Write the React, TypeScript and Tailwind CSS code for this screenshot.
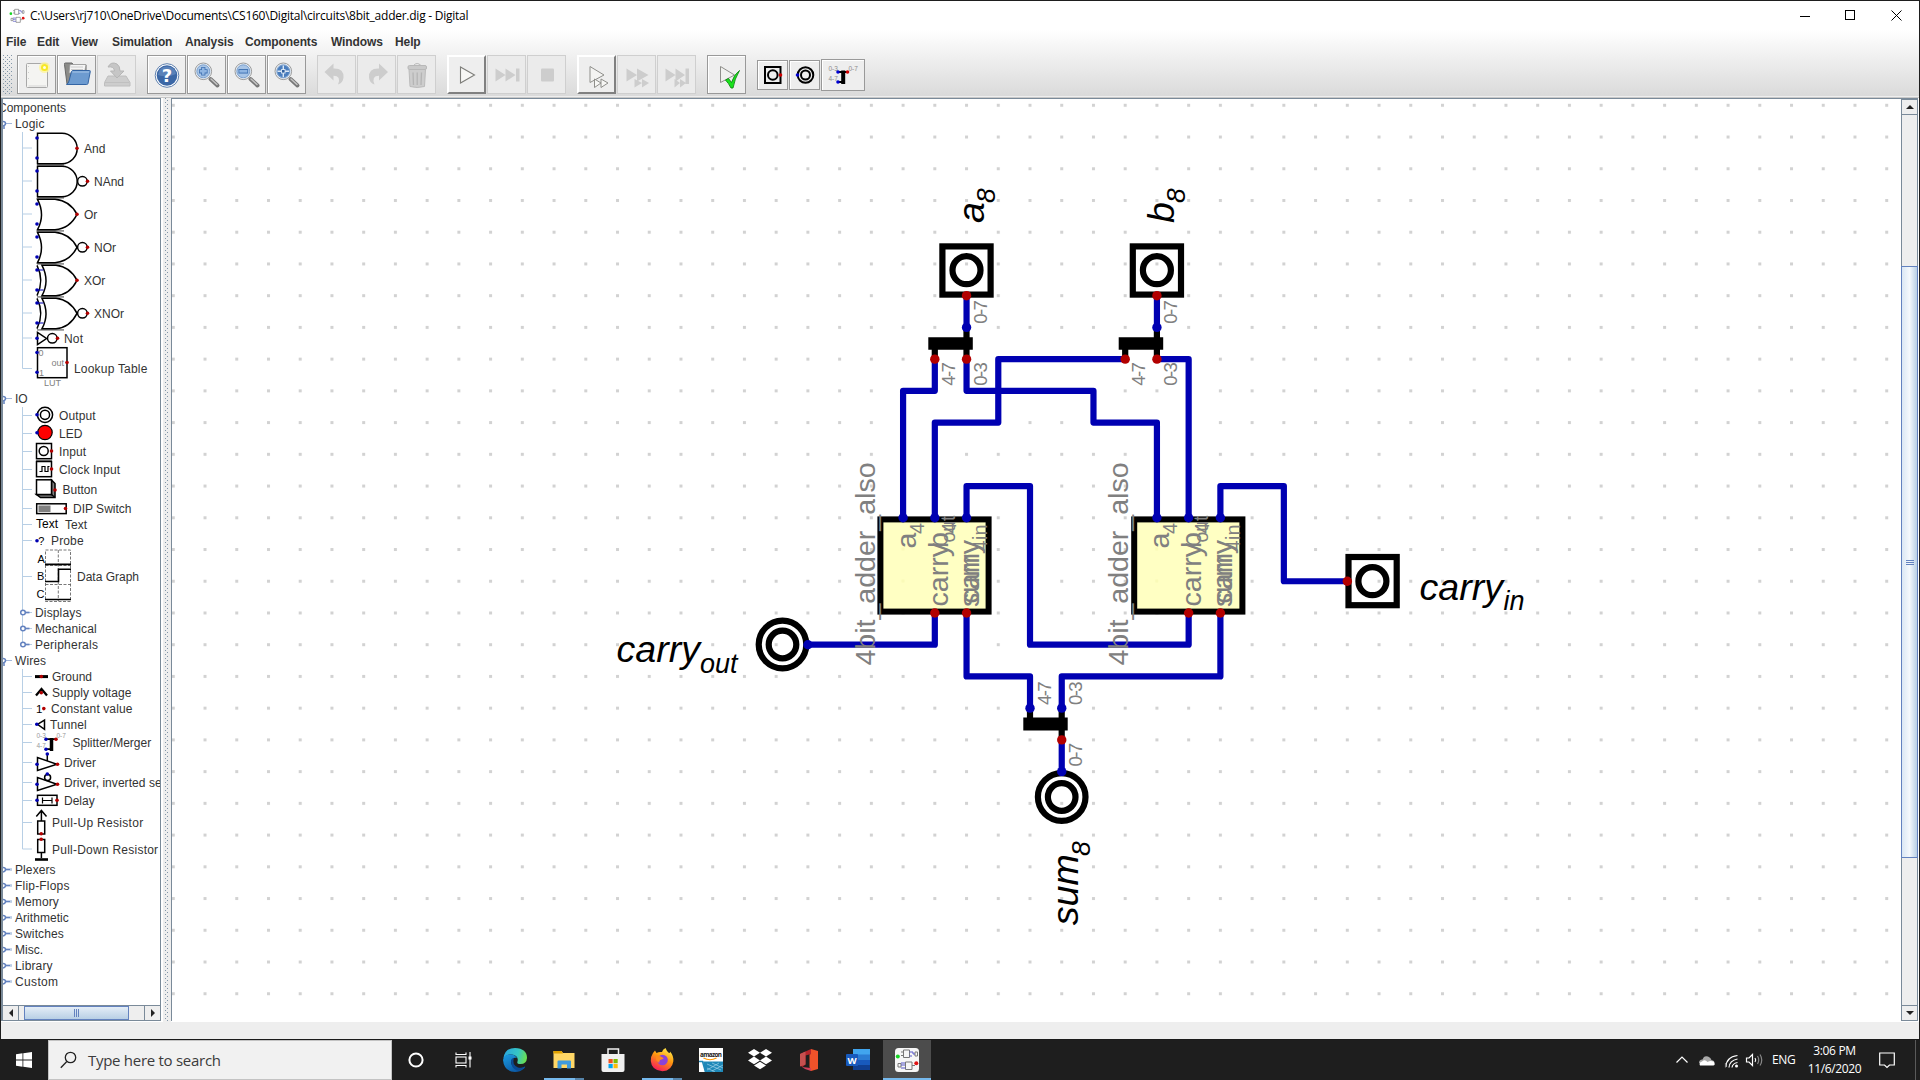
import React from "react";

const BLUE = "#0000b2";
const RED = "#b20000";

/* ------------------------------------------------------------------ */
/* Schematic                                                           */
/* ------------------------------------------------------------------ */

const PITCH = 31.73;
const gx = (i: number) => 173.3 + PITCH * i;
const gy = (j: number) => 105.3 + PITCH * j;

type P = [number, number];

const wires: P[][] = [
  [[25, 6], [25, 7]],
  [[31, 6], [31, 7]],
  [[24, 8], [24, 9], [23, 9], [23, 13]],
  [[25, 8], [25, 9], [29, 9], [29, 10], [31, 10], [31, 13]],
  [[31, 8], [32, 8], [32, 13]],
  [[30, 8], [26, 8], [26, 10], [24, 10], [24, 13]],
  [[25, 13], [25, 12], [27, 12], [27, 17], [32, 17], [32, 16]],
  [[24, 16], [24, 17], [20, 17]],
  [[25, 16], [25, 18], [27, 18], [27, 19]],
  [[33, 16], [33, 18], [28, 18], [28, 19]],
  [[28, 20], [28, 21]],
  [[33, 13], [33, 12], [35, 12], [35, 15], [37, 15]],
];

const bluePins: P[] = [[25, 7], [31, 7], [23, 13], [24, 13], [25, 13], [31, 13], [32, 13], [33, 13], [20, 17], [27, 19], [28, 19], [28, 21]];
const redPins: P[] = [[25, 6], [31, 6], [24, 8], [25, 8], [30, 8], [31, 8], [24, 16], [25, 16], [32, 16], [33, 16], [28, 20], [37, 15]];

function Vert({ x, y, size, children, fill = "#808080", italic, len }: { x: number; y: number; size: number; children: string; fill?: string; italic?: boolean; len?: number }) {
  return (
    <text transform={`translate(${x} ${y}) rotate(-90)`} fontSize={size} fill={fill} fontStyle={italic ? "italic" : "normal"} textLength={len}>
      {children}
    </text>
  );
}

function Chip({ dx }: { dx: number }) {
  return (
    <g transform={`translate(${dx} 0)`}>
      <rect x={880.4} y={519.4} width={108.2} height={92.2} fill="#ffffc3" stroke="#000" strokeWidth={6} />
      <rect x={901.5} y={547.5} width={3} height={3} fill="#fafab8" />
      <rect x={901.5} y={579.5} width={3} height={3} fill="#fafab8" />
    </g>
  );
}

function ChipText({ dx }: { dx: number }) {
  return (
    <g transform={`translate(${dx} 0)`}>
      <Vert x={874.700} y={665.600} size={28.56}>4bit_adder_also</Vert>
      <Vert x={916} y={548.500} size={28.56}>a</Vert>
      <Vert x={924} y={534} size={20}>4</Vert>
      <Vert x={948} y={606.5} size={28.56}>carry</Vert>
      <Vert x={954.8} y={542.5} size={19.4}>out</Vert>
      <Vert x={948} y={548} size={28.56}>b</Vert>
      <Vert x={955.8} y={533.500} size={20}>4</Vert>
      <Vert x={979} y={607} size={28.56}>sum</Vert>
      <Vert x={986.5} y={551.5} size={20}>4</Vert>
      <Vert x={979} y={603.5} size={28.56}>carry</Vert>
      <Vert x={987} y={540} size={20}>in</Vert>
    </g>
  );
}

function Schematic() {
  return (
    <svg className="block h-[922px] w-[1729px]" viewBox="172 99 1729 922" fontFamily='"Liberation Sans", Arial, sans-serif'>
      <defs>
        <pattern id="grid" x={171.8} y={103.8} width={PITCH} height={PITCH} patternUnits="userSpaceOnUse">
          <rect width={3} height={3} fill="#d2d2d2" />
        </pattern>
      </defs>
      <rect x={172} y={99} width={1729} height={922} fill="#fff" />
      <rect x={172} y={99} width={1729} height={922} fill="url(#grid)" />
      <Chip dx={0} />
      <Chip dx={253.8} />
      <g fill="none" stroke={BLUE} strokeWidth={6.2} strokeLinejoin="round" strokeLinecap="round">
        {wires.map((w, k) => (
          <polyline key={k} points={w.map(([i, j]) => `${gx(i)},${gy(j)}`).join(" ")} />
        ))}
      </g>
      <g fill="none" stroke="#000" strokeWidth={6.2}>
        {[966.5, 1156.9].map((cx) => (
          <g key={cx}>
            <rect x={cx - 24.1} y={246.4} width={48.2} height={48.2} />
            <circle cx={cx} cy={270.2} r={14} />
            <path d={`M${cx} 327.5V359M${cx - 31.7} 343V359`} />
            <path d={`M${cx - 38.2} 343.5H${cx + 6.3}`} strokeWidth={12.4} />
          </g>
        ))}
        <rect x={1348.5} y={557} width={48.2} height={48.2} />
        <circle cx={1372.4} cy={581.2} r={14} />
        <circle cx={782.5} cy={644.5} r={23.8} />
        <circle cx={782.5} cy={644.5} r={13.8} />
        <circle cx={1061.7} cy={797} r={23.8} />
        <circle cx={1061.7} cy={797} r={13.8} />
        <path d="M1030 708V724M1061.7 708V740" />
        <path d="M1023.3 724H1067.7" strokeWidth={13} />
      </g>
      {bluePins.map(([i, j]) => <circle key={`${i}-${j}`} cx={gx(i)} cy={gy(j)} r={4.7} fill={BLUE} />)}
      {redPins.map(([i, j]) => <circle key={`${i}-${j}`} cx={gx(i)} cy={gy(j)} r={4.7} fill={RED} />)}
      <ChipText dx={0} />
      <ChipText dx={253.3} />
      {[0, 190.6].map((d) => (
        <g key={d} transform={`translate(${d} 0)`}>
          <Vert x={986.800} y={323.700} size={18.600} len={23.600}>0-7</Vert>
          <Vert x={954.800} y={385.800} size={18.600} len={23.600}>4-7</Vert>
          <Vert x={986.800} y={385.800} size={18.600} len={23.600}>0-3</Vert>
        </g>
      ))}
      <Vert x={1050.500} y={705} size={18.600} len={23.600}>4-7</Vert>
      <Vert x={1081.700} y={705} size={18.600} len={23.600}>0-3</Vert>
      <Vert x={1081.700} y={766.500} size={18.600} len={23.600}>0-7</Vert>
      <Vert x={983.7} y={223} size={37.6} fill="#000" italic>a</Vert>
      <Vert x={994.5} y={203} size={26.500} fill="#000" italic>8</Vert>
      <Vert x={1173.7} y={223} size={37.6} fill="#000" italic>b</Vert>
      <Vert x={1184.9} y={203} size={26.500} fill="#000" italic>8</Vert>
      <Vert x={1078.3} y={925.3} size={37.6} fill="#000" italic>sum</Vert>
      <Vert x={1089.5} y={856} size={26.500} fill="#000" italic>8</Vert>
      <g fontStyle="italic" fill="#000">
        <text x={616.500} y={662} fontSize={37.6}>carry</text>
        <text x={700} y={673} fontSize={27}>out</text>
        <text x={1419.500} y={599.500} fontSize={37.6}>carry</text>
        <text x={1503.5} y={609.8} fontSize={27}>in</text>
      </g>
    </svg>
  );
}

/* ------------------------------------------------------------------ */
/* Component tree                                                      */
/* ------------------------------------------------------------------ */

const Dot = ({ x, y, c = BLUE }: { x: number; y: number; c?: string }) => <circle cx={x} cy={y} r={1.8} fill={c} stroke="none" />;

function AndIcon({ inv }: { inv?: boolean }) {
  return (
    <>
      <path d="M37 32.9H64" stroke="#808080" />
      <path d="M37.5 1.3H62a15.2 15.2 0 0 1 0 30.4H37.5z" />
      {inv && <circle cx={82.4} cy={16.3} r={4.8} />}
      <Dot x={37} y={6} /><Dot x={37} y={26} /><Dot x={inv ? 87.5 : 77} y={16.3} c={RED} />
    </>
  );
}

function OrIcon({ inv, x }: { inv?: boolean; x?: boolean }) {
  return (
    <>
      <path d="M37 32.9H64" stroke="#808080" />
      {x && <path d="M37 1.3q7.500 15 0 30.400" />}
      <path d={x ? "M42 1.3H56q14 1.500 21 15q-7 14-21 15.400H42q8-15 0-30.400z" : "M37.500 1.3H55q15 1.500 22 15q-7 14-22 15.400H37.500q8-15 0-30.400z"} />
      {inv && <circle cx={82.4} cy={16.3} r={4.800} />}
      {x && <path d="M38 6H43.500M38 26H43.500" stroke={BLUE} strokeWidth={1.2} />}
      <Dot x={37} y={6} /><Dot x={37} y={26} /><Dot x={inv ? 87.5 : 77} y={16.3} c={RED} />
    </>
  );
}

const tiny = { fill: "#808080", stroke: "none", fontSize: 9 };

type Row = { t: string; h: number; level: 0 | 1 | 2 | 3; tx?: number; icon?: React.ReactNode; last?: boolean; open?: boolean; ls?: number };

const rows: Row[] = [
  { t: "Components", h: 16, level: 0 },
  { t: "Logic", h: 16, level: 1, open: true, ls: 0.2 },
  { t: "And", h: 33, level: 2, tx: 84, icon: <AndIcon /> },
  { t: "NAnd", h: 33, level: 2, tx: 94, icon: <AndIcon inv /> },
  { t: "Or", h: 33, level: 2, tx: 84, icon: <OrIcon /> },
  { t: "NOr", h: 33, level: 2, tx: 94, icon: <OrIcon inv /> },
  { t: "XOr", h: 33, level: 2, tx: 84, icon: <OrIcon x /> },
  { t: "XNOr", h: 33, level: 2, tx: 94, icon: <OrIcon inv x /> },
  { t: "Not", h: 17, level: 2, tx: 64, ls: 0.2, icon: <><path d="M37.5 2.500V14.500L46.500 8.500z" /><circle cx={52.3} cy={8.3} r={4.8} /><Dot x={37} y={8.3} /><Dot x={57.5} y={8.3} c={RED} /></> },
  {
    t: "Lookup Table", h: 44, level: 2, tx: 74, last: true, ls: 0.2,
    icon: <><rect x={37.5} y={0.7} width={29.5} height={30} /><text x={38.500} y={9} {...tiny}>0</text><text x={39} y={29} {...tiny}>1</text><text x={51.5} y={18.500} {...tiny}>out</text><text x={44} y={39.3} {...tiny}>LUT</text><Dot x={37} y={5.500} /><Dot x={37} y={25.300} /><Dot x={67} y={15.5} c={RED} /></>,
  },
  { t: "IO", h: 16, level: 1, open: true },
  { t: "Output", h: 18, level: 2, tx: 59, ls: 0.1, icon: <><circle cx={45} cy={7.8} r={7.6} /><circle cx={45} cy={7.8} r={4.6} /><Dot x={37} y={7.8} /></> },
  { t: "LED", h: 18, level: 2, tx: 59, icon: <><circle cx={45} cy={7.5} r={7.2} fill="#f00" strokeWidth={1.2} /><Dot x={37} y={7.8} /></> },
  { t: "Input", h: 18, level: 2, tx: 59, ls: 0.1, icon: <><rect x={36.500} y={0.500} width={15} height={15.2} /><path d="M36 17.300H52" stroke="#808080" /><circle cx={43.700} cy={8} r={4.5} /><Dot x={51.500} y={8} c={RED} /></> },
  { t: "Clock Input", h: 18, level: 2, tx: 59, ls: 0.1, icon: <><rect x={36.5} y={0.5} width={15} height={15.2} /><path d="M39.500 10.500H42V5.500H45V10.500H48V5.500H49.500" strokeWidth={1.2} /><Dot x={51.5} y={8} c={RED} /></> },
  { t: "Button", h: 22, level: 2, tx: 62.5, icon: <><path d="M51.500 1L55 4.500V18.500H40.500L36.500 15.500H51.500z" fill="#808080" /><rect x={36.500} y={0.800} width={15} height={14.700} fill="#fff" /><path d="M51.500 15.500L55 18.500" /><Dot x={55} y={11} c={RED} /></> },
  { t: "DIP Switch", h: 16, level: 2, tx: 73, icon: <><rect x={36.7} y={2.8} width={29.500} height={9.800} /><rect x={38.500} y={4.500} width={12} height={6.500} fill="#808080" stroke="none" /><Dot x={65.5} y={7.500} c={RED} /></> },
  { t: "Text", h: 16, level: 2, tx: 65, icon: <text x={36} y={11.3} fontSize={12} stroke="none" fill="#000">Text</text> },
  { t: "Probe", h: 16, level: 2, tx: 51, ls: 0.15, icon: <><text x={38.200} y={11.6} fontSize={11} stroke="none" fill="#000">?</text><Dot x={37} y={7.800} /></> },
  {
    t: "Data Graph", h: 56, level: 2, tx: 77,
    icon: <><path d="M45.5 1H70.500V52.500H45.500zM58.300 1V52M45.500 16.500H70.500M45.500 35.500H70.500" strokeWidth={0.8} stroke="#555" strokeDasharray="3 1.500" /><path d="M45 15.400H71M45 32.500H58.500V20.200H71M45 50.500H71" strokeWidth={1.6} /><g stroke="none" fill="#000" fontSize={11}><text x={37.500} y={14}>A</text><text x={37} y={31}>B</text><text x={36.500} y={49}>C</text></g></>,
  },
  { t: "Displays", h: 16, level: 3, ls: 0.15 },
  { t: "Mechanical", h: 16, level: 3, ls: 0.1 },
  { t: "Peripherals", h: 16, level: 3, last: true, ls: 0.22 },
  { t: "Wires", h: 16, level: 1, open: true, ls: 0.1 },
  { t: "Ground", h: 16, level: 2, tx: 52, icon: <><path d="M35 7.600H48" strokeWidth={3} /><Dot x={41.300} y={7.500} c={RED} /></> },
  { t: "Supply voltage", h: 16, level: 2, tx: 52, ls: 0.05, icon: <><path d="M36 10.500L41.500 4L47 10.500" strokeWidth={2.300} /><Dot x={41.300} y={7.800} c={RED} /></> },
  { t: "Constant value", h: 16, level: 2, tx: 51, ls: 0.1, icon: <><text x={36} y={11.700} fontSize={11.500} stroke="none" fill="#000">1</text><Dot x={43.800} y={7.600} c={RED} /></> },
  { t: "Tunnel", h: 16, level: 2, tx: 50, ls: 0.1, icon: <><path d="M37.500 7.300L44.500 3V12.300z" /><Dot x={36.800} y={7.300} /></> },
  {
    t: "Splitter/Merger", h: 20, level: 2, tx: 72.5,
    icon: <><path d="M46 6.200H56M46 16.200H51" strokeWidth={1.800} /><path d="M51.500 5V18" strokeWidth={3.500} /><g stroke="none" fill="#999" fontSize={6.500}><text x={36.500} y={5.200}>0-3</text><text x={36.500} y={15}>4-7</text><text x={56.500} y={5.200}>0-7</text></g><Dot x={46} y={6.200} /><Dot x={46} y={16.200} /><Dot x={56} y={6.200} c={RED} /></>,
  },
  { t: "Driver", h: 20, level: 2, tx: 64, icon: <><path d="M37.500 4.500V17.500L57 11.300zM47.300 1.500V8" /><Dot x={47.300} y={1} /><Dot x={37} y={11.300} /><Dot x={57.500} y={11.300} c={RED} /></> },
  { t: "Driver, inverted select", h: 20, level: 2, tx: 64, ls: 0.05, icon: <><path d="M37.500 4.500V17.500L57 11.300z" /><circle cx={47.600} cy={4.600} r={3} /><Dot x={47.300} y={1} /><Dot x={37} y={11.300} /><Dot x={57.500} y={11.300} c={RED} /></> },
  { t: "Delay", h: 16, level: 2, tx: 64, icon: <><rect x={37.500} y={2.300} width={19.500} height={10} /><path d="M42.500 4.500V10.500M52 4.500V10.500M42.500 7.500H52" strokeWidth={1.200} /><Dot x={37} y={7.300} /><Dot x={57} y={7.300} c={RED} /></> },
  { t: "Pull-Up Resistor", h: 28, level: 2, tx: 52, ls: 0.3, icon: <><path d="M36.300 7.500L41.400 1.500L46.500 7.500M41.400 1.500V12" /><rect x={37.700} y={12} width={7} height={13} /><Dot x={41.200} y={24.800} c={RED} /></> },
  { t: "Pull-Down Resistor", h: 25, level: 2, tx: 52, last: true, ls: 0.24, icon: <><rect x={37.700} y={2.500} width={7} height={13} /><path d="M41.400 15.500V21" /><path d="M35 22.500H48" strokeWidth={2.600} /><Dot x={41.200} y={2.200} c={RED} /></> },
  ...([["Plexers", 0.1], ["Flip-Flops", 0.2], ["Memory", 0.1], ["Arithmetic", 0.05], ["Switches", 0.1], ["Misc.", 0], ["Library", 0.15], ["Custom", 0.35]] as [string, number][]).map(([t, ls]): Row => ({ t, ls, h: 16, level: 1 })),
];

function TreeRow({ r }: { r: Row }) {
  const tx = r.level === 1 ? 15 : r.level === 3 ? 35 : r.tx ?? 3;
  const m = r.h / 2 - 0.5;
  return (
    <div className="flex shrink-0 items-center overflow-visible" style={{ height: r.h }}>
      {r.level === 0 ? (
        <span className="-ml-[5px]" />
      ) : (
        <svg className="shrink-0 overflow-visible" width={tx - 3} height={r.h} viewBox={`3 0 ${tx - 3} ${r.h}`} fill="none" stroke="#000" strokeWidth={1.5}>
          {r.level === 1 && (
            <g stroke="#6382bf">
              <path d="M6 7.500H12" stroke={r.open ? "#a3b8d9" : "#6382bf"} strokeWidth={r.open ? 1 : 1.700} />
              <path d={r.open ? "M3 5.500Q5.500 5.500 5.500 7.500T3 10M4 9V13" : "M3 5.500Q5.500 5.500 5.500 7.500T3 10"} />
              {!r.open && <path d="M10 7.500H12" stroke="#b8cfe5" strokeWidth={1} />}
            </g>
          )}
          {r.level >= 2 && (
            <g stroke="#b8cfe5" strokeWidth={1}>
              <path d={`M22.500 0V${r.last ? m : r.h}M22.500 ${m}H32`} />
              {r.level === 3 && (
                <g stroke="#6382bf" strokeWidth={1.700}>
                  <path d="M25 7.500H29.500" />
                  <circle cx={23} cy={7.500} r={2.300} fill="#fff" strokeWidth={1.500} />
                </g>
              )}
            </g>
          )}
          {r.icon}
        </svg>
      )}
      <span className="whitespace-nowrap text-[12px] leading-4 text-[#333]" style={{ letterSpacing: r.ls ?? 0 }}>{r.t}</span>
    </div>
  );
}

/* ------------------------------------------------------------------ */
/* Toolbar                                                             */
/* ------------------------------------------------------------------ */

function Btn({ children, off, raised }: { children: React.ReactNode; off?: boolean; raised?: boolean }) {
  const cls = off
    ? "border border-[#cfcfcf] bg-[#ebebeb]"
    : raised
      ? "border-2 border-t-white border-l-white border-r-[#808080] border-b-[#808080] bg-[#eee]"
      : "border border-[#999] bg-[#eee] shadow-[inset_1px_1px_0_#fff]";
  return (
    <div className={`flex size-[39px] items-center justify-center ${cls}`}>
      <svg width={26} height={26} viewBox="0 0 26 26" className="overflow-visible">{children}</svg>
    </div>
  );
}

function Lens({ children }: { children: React.ReactNode }) {
  return (
    <g transform="translate(-0.500 0)">
      <path d="M17 17L24 23.500" stroke="#777" strokeWidth={4} strokeLinecap="round" />
      <path d="M17.500 17L23.500 22.500" stroke="#c4c4c4" strokeWidth={1.500} strokeLinecap="round" />
      <circle cx={9.800} cy={9.300} r={8.300} fill="#e8eef5" stroke="#9a9a9a" strokeWidth={1} />
      <circle cx={9.800} cy={9.300} r={6.500} fill="#a9c5e6" stroke="#6b93c4" strokeWidth={0.800} />
      {children}
    </g>
  );
}

const G = "#cdcdcd";

function Toolbar() {
  return (
    <div className="flex h-[41px] items-center pl-[2px]">
      <div className="mr-1 h-[39px] w-[10px] bg-[radial-gradient(circle_at_0.5px_0.5px,#8296a8_0.5px,transparent_0.7px),radial-gradient(circle_at_2.5px_2.5px,#8296a8_0.5px,transparent_0.7px)] bg-size-[4px_4px]" />
      <div className="flex gap-px">
        <Btn>
          <rect x={2.500} y={1.500} width={21} height={24} rx={1} fill="#f4f4f2" stroke="#a8a8a8" />
          <path d="M4.500 24H22" stroke="#d5d5d5" />
          <path d="M4.500 4V22" stroke="#ccc" strokeDasharray="1 5" />
          <circle cx={20.500} cy={5.500} r={5.500} fill="#fff59a" opacity={0.800} />
          <circle cx={20.500} cy={5.500} r={3.500} fill="#f7e827" />
          <circle cx={20.500} cy={5.500} r={1.500} fill="#fffde0" />
        </Btn>
        <Btn>
          <path d="M0.500 2.500Q0 1 1.500 1H8L9.500 3H22V9L4 22H3z" fill="#8b8b88" stroke="#666" />
          <path d="M6 2.500H22L20.500 11H5z" fill="#f5f5f5" stroke="#999" strokeWidth={0.800} />
          <path d="M7 5H19M7 7.500H19" stroke="#ccc" />
          <path d="M7.500 9.500Q8 8.500 9 8.500H25.500Q26.500 8.500 26.300 9.500L24 21.500Q23.800 22.500 22.500 22.500H2.500Q4.500 21.500 5 19z" fill="#6d9bd0" stroke="#3465a4" />
          <path d="M8.300 10H25" stroke="#a9c6e8" />
        </Btn>
        <Btn off>
          <path d="M4 14H22L26 20.500V24H0.500V20.500z" fill={G} stroke="#bebebe" />
          <path d="M1 20.500H25.500" stroke="#c0c0c0" />
          <path d="M4 5Q7 -1 13 2Q16 4 16 9H20L13 16L6.500 9H10.500Q10 4 4 5z" fill="#c6c6c6" stroke="#b6b6b6" />
        </Btn>
      </div>
      <div className="ml-[11px] flex gap-px">
        <Btn>
          <circle cx={13} cy={13.500} r={11.800} fill="#fff" stroke="#5d7fae" />
          <circle cx={13} cy={13.500} r={10.300} fill="#3b67a6" />
          <path d="M4 13Q13 16 22 12Q21 4.500 13 4.500Q5 4.500 4 13z" fill="#6f95c6" opacity={0.600} />
          <text x={13} y={20} textAnchor="middle" fontSize={18} fontWeight={700} fill="#fff" fontFamily='"DejaVu Sans", sans-serif'>?</text>
        </Btn>
        <Btn><Lens><path d="M9.800 5V13.600M5.500 9.300H14.100" stroke="#3f71b2" strokeWidth={4.200} /><path d="M9.800 5.800V12.800M6.300 9.300H13.300" stroke="#8fb5e2" strokeWidth={2.600} /></Lens></Btn>
        <Btn><Lens><path d="M5 9.300H14.600" stroke="#3f71b2" strokeWidth={4.500} /><path d="M5.800 9.300H13.800" stroke="#8fb5e2" strokeWidth={2.600} /></Lens></Btn>
        <Btn><Lens><circle cx={9.800} cy={9.300} r={6} fill="#4a7dbd" /><path d="M9.800 3.500V15M4 9.300H15.600" stroke="#dbe8f6" strokeWidth={1.400} /><rect x={7.600} y={7.100} width={4.400} height={4.400} fill="#dbe8f6" /><rect x={8.500} y={8} width={2.600} height={2.600} fill="#2f5f9e" /></Lens></Btn>
      </div>
      <div className="ml-[11px] flex gap-px">
        <Btn off><path d="M0.500 10L9.500 1.500V6.500Q20 6 19.500 15.500Q19 21 14 22.500Q17.500 14 9.500 13.800V18.500z" fill={G} /></Btn>
        <Btn off><path d="M21.500 10L12.500 1.500V6.500Q2 6 2.500 15.500Q3 21 8 22.500Q4.500 14 12.500 13.800V18.500z" transform="translate(2.500 0)" fill={G} /></Btn>
        <Btn off>
          <path d="M5 7.500H21.500L20.500 24.500Q13 26.500 6 24.500z" fill={G} stroke="#bbb" />
          <rect x={4} y={3.500} width={18.500} height={4} rx={1.500} fill="#c9c9c9" stroke="#b8b8b8" />
          <path d="M9.500 3.500Q13 -0.500 17 3.500" stroke="#b8b8b8" fill="none" />
          <path d="M9 10.500L9.500 23M13.200 10.500V23M17.500 10.500L17 23" stroke="#b4b4b4" strokeWidth={1.300} />
        </Btn>
      </div>
      <div className="ml-[11px] flex gap-px">
        <Btn raised><path d="M6.500 5L20.500 13L6.500 21z" fill="#f7f7f5" stroke="#7e7e7a" strokeWidth={1.100} /></Btn>
        <Btn off><path d="M1.500 6.500L11.500 13L1.500 19.500zM11.500 6.500L21.500 13L11.500 19.500zM22 6.500H25.500V19.500H22z" fill={G} /></Btn>
        <Btn off><rect x={7} y={6.500} width={13} height={13} rx={1} fill={G} /></Btn>
      </div>
      <div className="ml-[11px] flex gap-px">
        <Btn raised>
          <path d="M6 4.500L20 13L6 20.500z" fill="#f4f4f2" stroke="#8e8e8a" />
          <path d="M10.500 17L17 21L10.500 25.500zM17 17L24 21L17 25.500z" fill="#f7f7f5" stroke="#8e8e8a" />
        </Btn>
        <Btn off><path d="M2.500 6.500L13 13L2.500 19.500zM13 6.500L24.500 13L13 19.500zM10.500 17L18 21L10.500 25.500zM18 17L25 21L18 25.500z" fill={G} /></Btn>
        <Btn off><path d="M1.500 6.500L11.500 13L1.500 19.500zM11.500 6.500L21 13L11.500 19.500zM21.500 6.500H25V22H21.500zM10.500 17L16 21L10.500 25.500zM16 17L22 21L16 25.500z" fill={G} /></Btn>
      </div>
      <div className="ml-[11px] flex">
        <Btn>
          <path d="M6.500 4.500L20.500 13L6.500 20.500z" fill="#f1f1ef" stroke="#8e8e8a" />
          <path d="M11.500 18L14.500 16.500L17.500 20.500Q20 12.500 25.500 8.500Q20.500 17 19 26H17Q14.500 21 11.500 18z" fill="#19e31c" stroke="#0d8a10" strokeWidth={0.900} />
        </Btn>
      </div>
      <div className="ml-[11px] flex items-center gap-px">
        <div className="flex h-[30px] w-[31px] items-center justify-center border border-[#999] bg-[#eee] shadow-[inset_1px_1px_0_#fff]">
          <svg width={20} height={20} viewBox="0 0 20 20" fill="none" stroke="#000" strokeWidth={2}><rect x={2} y={2} width={15.500} height={16} /><circle cx={9.800} cy={10} r={4.800} /><Dot x={17.500} y={10} c="#d00000" /></svg>
        </div>
        <div className="flex h-[30px] w-[31px] items-center justify-center border border-[#999] bg-[#eee] shadow-[inset_1px_1px_0_#fff]">
          <svg width={20} height={20} viewBox="0 0 20 20" fill="none" stroke="#000" strokeWidth={2}><circle cx={10.500} cy={10} r={7.800} /><circle cx={10.500} cy={10} r={4.500} /><Dot x={2.500} y={10} c="#0000d0" /></svg>
        </div>
        <div className="flex h-[32px] w-[44px] items-center justify-center border border-[#999] bg-[#eee] shadow-[inset_1px_1px_0_#fff]">
          <svg width={32} height={20} viewBox="0 0 32 20" className="overflow-visible" fontFamily='"Liberation Sans", sans-serif'>
            <path d="M11 7H20M11 17H16" stroke="#000" strokeWidth={2} /><path d="M16.200 5.500V19" stroke="#000" strokeWidth={4} />
            <g fill="#8c8c8c" fontSize={6.500}><text x={1.500} y={5.500}>0-3</text><text x={1.500} y={16}>4-7</text><text x={21.500} y={5.500}>0-7</text></g>
            <Dot x={11} y={7} c="#0000d0" /><Dot x={11} y={17} c="#0000d0" /><Dot x={20.500} y={7} c="#d00000" />
          </svg>
        </div>
      </div>
    </div>
  );
}

/* ------------------------------------------------------------------ */
/* Taskbar                                                             */
/* ------------------------------------------------------------------ */

function MiniDigital({ round }: { round?: boolean }) {
  return (
    <>
      {round && <rect width={24} height={24} rx={3.500} fill="#f6f6f6" />}
      <g fill="none" stroke="#777" strokeWidth={1}>
        <path d="M8.500 2H14.500V9.500H8.500zM6 4H8.500M6 7.500H8.500" />
        <path d="M10.500 14H17V21.500H10.500zM17 17.500H20" />
        <path d="M3 15.500H6V19H3z" />
        <path d="M20 4H22.500V8H20z" />
        <path d="M14.500 4H18V6H20M14.500 8H17M6 17H10M6 15H10M6 20H10.500" stroke="#5656c8" />
      </g>
      <circle cx={2.800} cy={8.500} r={2} fill="#15d524" />
      <circle cx={21.300} cy={15.300} r={2} fill="#e01313" />
    </>
  );
}

function Task({ children, line, active }: { children: React.ReactNode; line?: boolean; active?: boolean }) {
  return (
    <div className={`flex h-10 w-12 flex-col items-center ${active ? "bg-[#4c4c4c]" : ""}`}>
      <svg className="mt-2 mb-[6px] shrink-0" width={24} height={24} viewBox="0 0 24 24">{children}</svg>
      {active && <div className="h-[2px] w-full bg-[#76b9ed]" />}
      {line && <div className="flex h-[2px] w-10"><div className="w-[31px] bg-[#76b9ed]" /><div className="w-[9px] bg-[#5684aa]" /></div>}
    </div>
  );
}

function Taskbar() {
  return (
    <div className="flex h-[41px] w-full border-t border-[#1a1a1a] bg-[#1e1e1e] font-['Open_Sans',sans-serif] text-white">
      <div className="flex w-12 items-center justify-center">
        <svg width={16} height={16} viewBox="0 0 16 16" fill="#fff"><path d="M0 2.200L6.500 1.300V7.600H0zM7.300 1.200L16 0V7.600H7.300zM0 8.400H6.500V14.700L0 13.800zM7.300 8.400H16V16L7.300 14.800z" /></svg>
      </div>
      <div className="flex w-[344px] items-center border border-[#c3c3c3] bg-[#f1f1f1] pl-[11px]">
        <svg width={17} height={18} viewBox="0 0 17 18" fill="none" stroke="#222" strokeWidth={1.300}><circle cx={10.500} cy={6.500} r={5.200} /><path d="M6.800 10.500L0.800 16.800" /></svg>
        <span className="ml-[11px] text-[15px] tracking-[-0.280px] text-[#3b3b3b]">Type here to search</span>
      </div>
      <Task><circle cx={12} cy={12} r={6.600} fill="none" stroke="#fff" strokeWidth={2} /></Task>
      <Task><g fill="none" stroke="#fff" strokeWidth={1.100}><path d="M4 4.500V6.500H14V4.500M4 19.500V17.500H14V19.500" /><rect x={4} y={9} width={10} height={6} /><path d="M18 4V19.500" /></g><rect x={16.500} y={8.500} width={3} height={3} fill="#fff" /></Task>
      <div className="ml-[3px] flex gap-px">
        <Task>
          <defs>
            <linearGradient id="eg" x1="0" y1="0.300" x2="1" y2="0.500"><stop offset="0" stopColor="#2aa6dd" /><stop offset="0.600" stopColor="#36c6c4" /><stop offset="1" stopColor="#6be04f" /></linearGradient>
            <linearGradient id="eb" x1="0" y1="0" x2="0.600" y2="1"><stop offset="0" stopColor="#1b9de2" /><stop offset="1" stopColor="#0c59a4" /></linearGradient>
          </defs>
          <path d="M0.500 10Q2 0 12 0Q24 0.500 24 10Q23.500 16 17.500 16Q13.500 16 14.500 13.500Q15.500 10.500 13 8Q6 3.500 0.500 10z" fill="url(#eg)" />
          <path d="M0 12Q0.500 6.500 7 6.200Q12 6.500 14 10Q8.500 9 8 14.500Q9.500 21.500 17 20.800Q21 19.500 22 18.500Q22.500 19 21 20.500Q17 24 12 24Q1 23.500 0 12z" fill="url(#eb)" />
          <path d="M8 13Q8 10.500 11 10Q8.500 16.500 15 19.500Q18.500 20.500 22 18.500Q19 23 14 22.500Q8 20.500 8 13z" fill="#0a4a94" />
        </Task>
        <Task line>
          <path d="M1.500 3H9.500L11 5H22.500V20H1.500z" fill="#ffd766" /><path d="M1.500 3H9.500L11 5.500H1.500z" fill="#e0a100" /><path d="M5.500 19.500V13.500Q5.500 12.500 6.500 12.500H18Q19 12.500 19 13.500V20.500H15V16.500H9.500V20.500H5.500z" fill="#3f9bdc" />
        </Task>
        <Task>
          <path d="M0.500 6H23.500V22Q23.500 24 21.500 24H2.500Q0.500 24 0.500 22z" fill="#f0f0f0" /><path d="M7 7V1H17.500V7" fill="none" stroke="#f0f0f0" strokeWidth={1.500} />
          <rect x={7.500} y={11} width={4.200} height={4.200} fill="#f05021" /><rect x={12.500} y={11} width={4.200} height={4.200} fill="#80bb03" /><rect x={7.500} y={16} width={4.200} height={4.200} fill="#01a5f0" /><rect x={12.500} y={16} width={4.200} height={4.200} fill="#ffba08" />
        </Task>
        <Task line>
          <defs><linearGradient id="ff" x1="0.800" y1="0" x2="0.300" y2="1"><stop offset="0" stopColor="#fff04f" /><stop offset="0.450" stopColor="#ff980e" /><stop offset="1" stopColor="#f5175e" /></linearGradient></defs>
          <path d="M3 5L5 2.500L6.500 5Q9 3.500 12 4Q12.500 1.500 15.500 0Q16.500 3 19 5Q20 5.500 20 3.500Q24 8 23.300 13.500Q22 22.500 12.500 23.300Q1.500 22.500 0.800 13Q0.800 8 3 5z" fill="url(#ff)" />
          <circle cx={12.500} cy={12} r={5.300} fill="#8b42d8" />
          <path d="M6 8Q9.500 7 12.500 9.500Q15 10.500 11.500 11.500Q8.500 12.500 9.500 15Q5 13 6 8z" fill="#ff8a1c" />
        </Task>
        <Task>
          <rect width={24} height={24} fill="#fff" /><path d="M4 13.500H24V24H6z" fill="#1e88b8" /><path d="M0 13.500H3.500L6.500 24" stroke="#1e88b8" strokeWidth={1.500} fill="none" />
          <path d="M8 16L22 22M8 20L16 24M13 15L24 20M8 22L20 15M13 23L24 17" stroke="#9fd3ea" strokeWidth={0.700} />
          <text x={1} y={8.800} fontSize={6.300} fontWeight={700} fill="#222" textLength={22}>amazon</text><path d="M4.500 10Q11 13.500 17.500 10" fill="none" stroke="#f90" strokeWidth={1.100} />
        </Task>
        <Task><path d="M6 1L12 4.800L6 8.600L0 4.800zM18 1L24 4.800L18 8.600L12 4.800zM6 8.600L12 12.400L6 16.200L0 12.400zM18 8.600L24 12.400L18 16.200L12 12.400zM12 13.700L18 17.500L12 21.300L6 17.500z" fill="#fff" /></Task>
        <Task>
          <path d="M3 6L14 1V6L8.500 7.500V16.500L5.500 19L3 17.500z" fill="#b5262c" /><path d="M14 1L21 3V21L14 23L12.500 19V6.500L14 6z" fill="#f0522a" /><path d="M5 19L14 20V23L8 21z" fill="#d03f5a" /><path d="M3 6L8.500 3.500V16.500L3 18.500z" fill="#c6504f" />
        </Task>
        <Task>
          <rect x={7} y={1} width={17} height={6} fill="#41a5ee" /><rect x={7} y={6.500} width={17} height={5.500} fill="#2b7cd3" /><rect x={7} y={12} width={17} height={5} fill="#185abd" /><rect x={7} y={17} width={17} height={5} fill="#103f91" /><rect x={0} y={6} width={12} height={12} rx={1} fill="#185abd" />
          <text x={6} y={15.500} textAnchor="middle" fontSize={9.500} fontWeight={700} fill="#fff">W</text>
        </Task>
        <Task active><MiniDigital round /></Task>
      </div>
      <div className="ml-auto flex items-center">
        <svg width={92} height={20} viewBox="0 0 92 20" fill="none" stroke="#fff" strokeWidth={1.200} className="mr-[5px]">
          <path d="M1.500 12.500L7 7L12.500 12.500" />
          <path d="M24 13Q24 9.500 27.500 9.500Q29 5 33 6.500Q36 7.500 36.500 10Q39.500 10.500 39.500 13z" fill="#a9a9a9" stroke="none" />
          <path d="M25 15.500Q23.500 12.500 27 11.500Q30 9 32.500 12Q35 10.500 38.500 11.500Q41 14.500 38.500 15.500z" fill="#fff" stroke="none" />
          <path d="M51 17Q51 7 62.500 5.500M54 17.500Q54.500 10.500 62.500 9M57 17.500Q57.500 13.500 62.500 12.500" strokeWidth={1.200} /><path d="M50.500 13V17.500" stroke="#888" /><circle cx={61.500} cy={16} r={1.500} fill="#fff" stroke="none" />
          <path d="M71.500 8H74L77.500 4.500V15.500L74 12H71.500z" /><path d="M80 8Q81.500 10 80 12" /><path d="M82.500 6Q85 10 82.500 14M85 4.500Q88.500 10 85 15.500" stroke="#888" />
        </svg>
        <span className="mr-[11px] w-[25px] text-[12px] tracking-[-0.3px]">ENG</span>
        <div className="mr-[18px] flex w-[53px] flex-col items-center text-[12px] leading-[18px] tracking-[-0.35px] whitespace-nowrap"><span>3:06 PM</span><span>11/6/2020</span></div>
        <svg width={16} height={17} viewBox="0 0 16 17" fill="none" stroke="#fff" strokeWidth={1.200} className="mr-[20px]"><path d="M0.700 1H15.300V13H10.500L8 15.500L5.500 13H0.700z" /></svg>
        <div className="mr-1 h-10 w-px bg-[#5a5a5a]" />
      </div>
    </div>
  );
}

/* ------------------------------------------------------------------ */
/* Window                                                              */
/* ------------------------------------------------------------------ */

const menu = [
  { t: "File", w: "w-[31px]" }, { t: "Edit", w: "w-[34px]" }, { t: "View", w: "w-[41px]" }, { t: "Simulation", w: "w-[73px]" },
  { t: "Analysis", w: "w-[60px]" }, { t: "Components", w: "w-[86px]" }, { t: "Windows", w: "w-[64px]" }, { t: "Help", w: "w-[40px]" },
];

const Arrow = ({ d }: { d: string }) => <svg width={8} height={8} viewBox="0 0 8 8" fill="#222"><path d={d} /></svg>;

export default function App() {
  return (
    <div className="flex h-[1080px] w-[1920px] flex-col overflow-hidden bg-[#1e1e1e] font-['Liberation_Sans',Arial,sans-serif]">
      <div className="mt-px mr-px ml-px flex h-[1038px] shrink-0 flex-col bg-[#eee]">
        <div className="flex h-[29px] shrink-0 items-center bg-white pl-2">
          <svg width={16} height={16} viewBox="0 0 24 24"><MiniDigital /></svg>
          <span className="ml-[5px] font-['Open_Sans',sans-serif] text-[12px] tracking-[-0.246px] whitespace-nowrap text-black">
            C:\Users\rj710\OneDrive\Documents\CS160\Digital\circuits\8bit_adder.dig - Digital
          </span>
          <div className="ml-auto flex items-center gap-[35px] pr-[17px]">
            <svg width={10} height={10} stroke="#000" fill="none"><path d="M0 5.500H10" /></svg>
            <svg width={11} height={11} stroke="#000" fill="none"><rect x={0.500} y={0.500} width={9} height={9} /></svg>
            <svg width={11} height={11} stroke="#000" fill="none"><path d="M0.500 0.500L10.500 10.500M10.500 0.500L0.500 10.500" /></svg>
          </div>
        </div>
        <div className="flex h-[66px] shrink-0 flex-col bg-linear-to-b from-white to-[#dadada]">
          <div className="flex h-[24px] items-center pl-[5px] text-[12px] leading-4 font-bold text-[#333]">
            {menu.map((m) => <span key={m.t} className={`${m.w} shrink-0 tracking-[-0.1px]`}>{m.t}</span>)}
          </div>
          <Toolbar />
        </div>
        <div className="h-[2px] shrink-0 border-b border-[#c8c8c8] bg-[#eee]" />
        <div className="flex h-[924px] shrink-0 bg-white">
          <div className="mb-[1px] flex w-[160px] shrink-0 flex-col border-t border-r border-l-2 border-[#7a8a99] pt-px">
            <div className="flex h-[905px] shrink-0 flex-col overflow-hidden">
              {rows.map((r) => <TreeRow key={r.t} r={r} />)}
            </div>
            <div className="flex h-4 shrink-0 border-y border-[#7a8a99] bg-[#eee]">
              <div className="flex w-[16px] items-center justify-center border-r border-[#7a8a99]"><Arrow d="M6 0V8L2 4z" /></div>
              <div className="ml-[5px] flex w-[105px] items-center justify-center gap-px border border-[#6382bf] bg-linear-to-b from-[#e4edf7] to-[#b8cfe5]">
                <i className="h-2 w-px bg-[#6382bf]" /><i className="h-2 w-px bg-[#6382bf]" /><i className="h-2 w-px bg-[#6382bf]" />
              </div>
              <div className="ml-auto flex w-[16px] items-center justify-center border-l border-[#7a8a99]"><Arrow d="M2 0V8L6 4z" /></div>
            </div>
          </div>
          <div className="ml-[2px] flex w-[8px] justify-center bg-[#eee]">
            <div className="w-[4px] bg-[radial-gradient(circle_at_0.5px_0.5px,#8296a8_0.5px,transparent_0.7px),radial-gradient(circle_at_2.5px_2.5px,#8296a8_0.5px,transparent_0.7px)] bg-size-[4px_4px]" />
          </div>
          <div className="flex h-[923px] border-t border-l border-[#7a8a99]">
            <Schematic />
            <div className="flex w-[17px] flex-col border-x border-[#7a8a99] bg-[#eee]">
              <div className="flex h-[16px] items-center justify-center border-y border-[#7a8a99]"><Arrow d="M0 6H8L4 2z" /></div>
              <div className="-mx-px mt-[151px] flex h-[592px] flex-col items-center justify-center gap-px border border-[#6382bf] bg-linear-to-r from-[#dbe7f4] via-[#f4f8fc] to-[#b8cfe5]">
                <i className="h-px w-2 bg-[#6382bf]" /><i className="h-px w-2 bg-[#6382bf]" /><i className="h-px w-2 bg-[#6382bf]" />
              </div>
              <div className="mt-auto flex h-[16px] items-center justify-center border-y border-[#7a8a99]"><Arrow d="M0 2H8L4 6z" /></div>
            </div>
          </div>
        </div>
      </div>
      <Taskbar />
    </div>
  );
}
